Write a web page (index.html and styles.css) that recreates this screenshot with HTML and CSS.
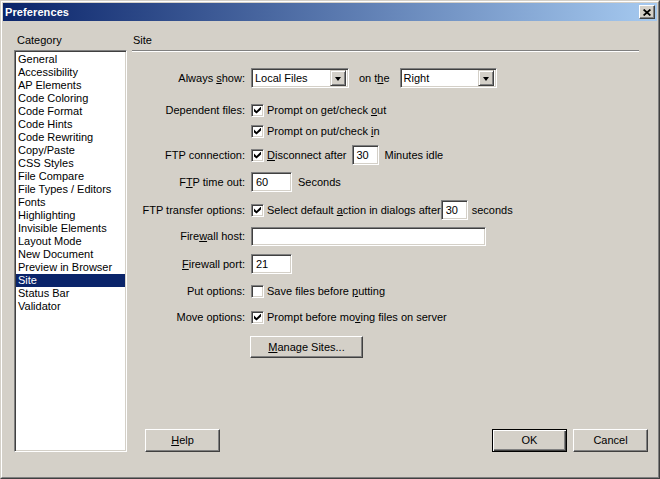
FILE: index.html
```html
<!DOCTYPE html>
<html>
<head>
<meta charset="utf-8">
<title>Preferences</title>
<link rel="stylesheet" href="styles.css">
</head>
<body>
<div class="window">
  <div class="frame">
    <div class="titlebar">
      <span class="title">Preferences</span>
      <span class="close-btn">
        <svg width="8" height="7" viewBox="0 0 8 7"><path d="M0.6 0.5 L7.4 6.5 M7.4 0.5 L0.6 6.5" stroke="#000" stroke-width="1.7" fill="none"/></svg>
      </span>
    </div>
    <div class="body">
      <div class="left">
        <div class="cat-label">Category</div>
        <ul class="list">
          <li>General</li>
          <li>Accessibility</li>
          <li>AP Elements</li>
          <li>Code Coloring</li>
          <li>Code Format</li>
          <li>Code Hints</li>
          <li>Code Rewriting</li>
          <li>Copy/Paste</li>
          <li>CSS Styles</li>
          <li>File Compare</li>
          <li>File Types / Editors</li>
          <li>Fonts</li>
          <li>Highlighting</li>
          <li>Invisible Elements</li>
          <li>Layout Mode</li>
          <li>New Document</li>
          <li>Preview in Browser</li>
          <li class="selected">Site</li>
          <li>Status Bar</li>
          <li>Validator</li>
        </ul>
      </div>
      <div class="right">
        <div class="section-label">Site</div>
        <div class="sep"></div>
        <div class="form">
          <div class="row">
            <span class="label">Always <u>s</u>how:</span>
            <span class="select sel-wide"><span class="sel-text">Local Files</span><span class="drop"><span class="tri"></span></span></span>
            <span class="on-the">on t<u>h</u>e</span>
            <span class="select sel-right"><span class="sel-text">Right</span><span class="drop"><span class="tri"></span></span></span>
          </div>
          <div class="row mt12">
            <span class="label">Dependent files:</span>
            <span class="check checked"></span>
            <span class="ctext">Prompt on get/check <u>o</u>ut</span>
          </div>
          <div class="row mt1">
            <span class="label"></span>
            <span class="check checked"></span>
            <span class="ctext">Prompt on put/check <u>i</u>n</span>
          </div>
          <div class="row mt4">
            <span class="label">FTP connection:</span>
            <span class="check checked"></span>
            <span class="ctext"><u>D</u>isconnect after</span>
            <span class="input in-small in-after">30</span>
            <span class="suffix">Minutes idle</span>
          </div>
          <div class="row mt7">
            <span class="label">F<u>T</u>P time out:</span>
            <span class="input in-med">60</span>
            <span class="suffix">Seconds</span>
          </div>
          <div class="row mt8">
            <span class="label">FTP transfer options:</span>
            <span class="check checked"></span>
            <span class="ctext">Select default <u>a</u>ction in dialogs after</span>
            <span class="input in-small in-tight">30</span>
            <span class="suffix suffix-tight">seconds</span>
          </div>
          <div class="row mt6">
            <span class="label">Fire<u>w</u>all host:</span>
            <span class="input in-wide"></span>
          </div>
          <div class="row mt8">
            <span class="label"><u>F</u>irewall port:</span>
            <span class="input in-med">21</span>
          </div>
          <div class="row mt7">
            <span class="label">Put options:</span>
            <span class="check"></span>
            <span class="ctext">Save files before <u>p</u>utting</span>
          </div>
          <div class="row mt6">
            <span class="label">Move options:</span>
            <span class="check checked"></span>
            <span class="ctext">Prompt before mo<u>v</u>ing files on server</span>
          </div>
          <div class="row-btn">
            <span class="btn manage"><u>M</u>anage Sites...</span>
          </div>
        </div>
        <div class="buttons">
          <span class="btn"><u>H</u>elp</span>
          <span class="spacer"></span>
          <span class="btn default">OK</span>
          <span class="btn cancel">Cancel</span>
        </div>
      </div>
    </div>
  </div>
</div>
</body>
</html>
```

FILE: styles.css
```css
* { box-sizing: border-box; }

html, body {
  margin: 0;
  padding: 0;
  background: #d4d0c8;
}

body {
  font-family: "Liberation Sans", Arial, sans-serif;
  font-size: 11px;
  line-height: 13px;
  color: #000;
}

u { text-decoration: underline; text-underline-offset: 1px; }

.window {
  width: 660px;
  height: 479px;
  border: 1px solid;
  border-color: #d4d0c8 #404040 #404040 #d4d0c8;
  background: #d4d0c8;
}

.frame {
  height: 100%;
  border: 1px solid;
  border-color: #ffffff #808080 #808080 #ffffff;
  padding: 1px;
  display: flex;
  flex-direction: column;
}

.titlebar {
  height: 18px;
  flex: none;
  display: flex;
  align-items: center;
  justify-content: space-between;
  padding: 0 2px 0 2px;
  background: linear-gradient(to right, #0a246a, #a6caf0);
}

.title {
  color: #fff;
  font-weight: bold;
  font-size: 11px;
  letter-spacing: 0.1px;
}

.close-btn {
  width: 16px;
  height: 14px;
  display: flex;
  align-items: center;
  justify-content: center;
  background: #d4d0c8;
  border: 1px solid;
  border-color: #ffffff #404040 #404040 #ffffff;
  box-shadow: inset -1px -1px #808080;
}

.body {
  flex: 1;
  display: flex;
  padding: 13px 9px 24px 11px;
}

.left {
  width: 113px;
  display: flex;
  flex-direction: column;
}

.cat-label {
  height: 13px;
  padding-left: 3px;
  margin-bottom: 3px;
}

.list {
  list-style: none;
  margin: 0;
  padding: 2px 1px 0 1px;
  width: 113px;
  flex: 1;
  background: #fff;
  border: 1px solid;
  border-color: #808080 #ffffff #ffffff #808080;
  box-shadow: inset 1px 1px #404040, inset -1px -1px #d4d0c8;
}

.list li {
  height: 13px;
  line-height: 13px;
  padding-left: 2px;
  white-space: nowrap;
}

.list li.selected {
  background: #0a246a;
  color: #fff;
}

.right {
  flex: 1;
  margin-left: 5px;
  display: flex;
  flex-direction: column;
}

.section-label {
  height: 13px;
  padding-left: 1px;
  margin-bottom: 3px;
}

.sep {
  width: 507px;
  height: 2px;
  border-top: 1px solid #808080;
  border-bottom: 1px solid #ffffff;
}

.form {
  margin-top: 16px;
  display: flex;
  flex-direction: column;
}

.row {
  height: 20px;
  display: flex;
  align-items: center;
  white-space: nowrap;
}

.mt1 { margin-top: 1px; }
.mt4 { margin-top: 4px; }
.mt6 { margin-top: 6px; }
.mt7 { margin-top: 7px; }
.mt8 { margin-top: 8px; }
.mt12 { margin-top: 12px; }

.label {
  width: 113px;
  margin-right: 6px;
  text-align: right;
  flex: none;
}

.check {
  width: 13px;
  height: 13px;
  flex: none;
  background: #fff;
  border: 1px solid;
  border-color: #808080 #ffffff #ffffff #808080;
  box-shadow: inset 1px 1px #404040, inset -1px -1px #d4d0c8;
  margin-right: 3px;
  position: relative;
}

.check.checked::after {
  content: "";
  position: absolute;
  left: 2px;
  top: 2px;
  width: 7px;
  height: 7px;
  background: #000;
  clip-path: polygon(0% 28%, 36% 64%, 100% 0%, 100% 42%, 36% 100%, 0% 72%);
}

.ctext { flex: none; }

.select {
  height: 20px;
  display: flex;
  align-items: center;
  background: #fff;
  border: 1px solid;
  border-color: #808080 #ffffff #ffffff #808080;
  box-shadow: inset 1px 1px #404040, inset -1px -1px #d4d0c8;
  padding: 2px 2px 2px 3px;
}

.sel-wide { width: 98px; }
.sel-right { width: 97px; }

.sel-text { flex: 1; }

.drop {
  width: 16px;
  height: 16px;
  display: flex;
  align-items: center;
  justify-content: center;
  background: #d4d0c8;
  border: 1px solid;
  border-color: #d4d0c8 #404040 #404040 #d4d0c8;
  box-shadow: inset 1px 1px #ffffff, inset -1px -1px #808080;
}

.tri {
  width: 0;
  height: 0;
  border-left: 3.5px solid transparent;
  border-right: 3.5px solid transparent;
  border-top: 4px solid #000;
  margin-top: 1px;
}

.on-the {
  margin: 0 10px 0 10px;
}

.input {
  height: 20px;
  display: flex;
  align-items: center;
  background: #fff;
  border: 1px solid;
  border-color: #808080 #ffffff #ffffff #808080;
  box-shadow: inset 1px 1px #404040, inset -1px -1px #d4d0c8;
  padding-left: 4px;
  flex: none;
}

.in-small { width: 27px; }
.in-med { width: 41px; }
.in-wide { width: 235px; height: 19px; }
.in-after { margin-left: 5px; }
.in-tight { margin-left: 0; }

.suffix { margin-left: 6px; }
.suffix-tight { margin-left: 4px; }

.row-btn {
  margin-top: 9px;
  padding-left: 118px;
  display: flex;
}

.btn {
  width: 75px;
  height: 23px;
  display: flex;
  align-items: center;
  justify-content: center;
  background: #d4d0c8;
  border: 1px solid;
  border-color: #ffffff #404040 #404040 #ffffff;
  box-shadow: inset -1px -1px #808080;
  flex: none;
}

.btn.manage {
  width: 113px;
  height: 22px;
}

.btn.default {
  border-color: #000;
  box-shadow: inset 1px 1px #ffffff, inset -1px -1px #404040, inset -2px -2px #808080;
}

.btn.cancel { margin-left: 6px; }

.buttons {
  margin-top: auto;
  display: flex;
  padding-left: 13px;
}

.spacer { flex: 1; }
```
